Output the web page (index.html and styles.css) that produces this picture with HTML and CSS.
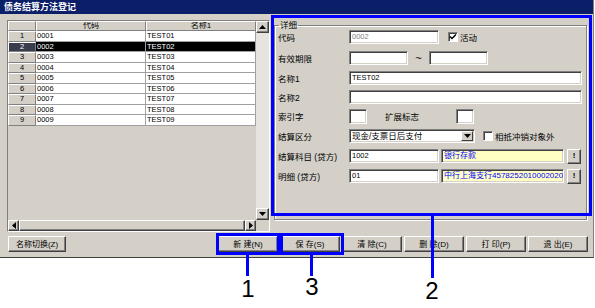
FILE: index.html
```html
<!DOCTYPE html>
<html lang="zh-CN">
<head>
  <meta charset="UTF-8" />
  <title>债务结算方法登记</title>
  <link rel="stylesheet" href="styles.css">
</head>
<body>
  <div class="window">
    <div class="titlebar">债务结算方法登记</div>

    <div class="main">
      <div class="grid">
        <div class="grid-body">
          <div class="grid-table">
            <div class="grid-row head">
              <div class="cell rowhead"></div>
              <div class="cell colhead">代码</div>
              <div class="cell colhead">名称1</div>
            </div>
            <div class="grid-row"><div class="cell rowhead">1</div><div class="cell">0001</div><div class="cell">TEST01</div></div>
            <div class="grid-row selected"><div class="cell rowhead">2</div><div class="cell">0002</div><div class="cell">TEST02</div></div>
            <div class="grid-row"><div class="cell rowhead">3</div><div class="cell">0003</div><div class="cell">TEST03</div></div>
            <div class="grid-row"><div class="cell rowhead">4</div><div class="cell">0004</div><div class="cell">TEST04</div></div>
            <div class="grid-row"><div class="cell rowhead">5</div><div class="cell">0005</div><div class="cell">TEST05</div></div>
            <div class="grid-row"><div class="cell rowhead">6</div><div class="cell">0006</div><div class="cell">TEST06</div></div>
            <div class="grid-row"><div class="cell rowhead">7</div><div class="cell">0007</div><div class="cell">TEST07</div></div>
            <div class="grid-row"><div class="cell rowhead">8</div><div class="cell">0008</div><div class="cell">TEST08</div></div>
            <div class="grid-row"><div class="cell rowhead">9</div><div class="cell">0009</div><div class="cell">TEST09</div></div>
          </div>
          <div class="vscroll">
            <div class="sbtn"><svg width="7" height="4" viewBox="0 0 7 4"><polygon points="3.5,0 7,4 0,4" /></svg></div>
            <div class="strack"></div>
            <div class="sbtn"><svg width="7" height="4" viewBox="0 0 7 4"><polygon points="0,0 7,0 3.5,4" /></svg></div>
          </div>
        </div>
        <div class="hscroll">
          <div class="sbtn"><svg width="4" height="7" viewBox="0 0 4 7"><polygon points="4,0 4,7 0,3.5" /></svg></div>
          <div class="sthumb"></div>
          <div class="sbtn"><svg width="4" height="7" viewBox="0 0 4 7"><polygon points="0,0 4,3.5 0,7" /></svg></div>
          <div class="scorner"></div>
        </div>
      </div>

      <fieldset class="detail">
        <legend>详细</legend>
        <div class="form">
          <div class="frow r21">
            <span class="lbl">代码</span>
            <div class="field w90 disabled">0002</div>
            <span class="check on ck1"><svg width="8" height="8" viewBox="0 0 8 8"><path d="M1 3.5 L3 5.5 L7 1.5" /></svg></span>
            <span class="ck-lbl">活动</span>
          </div>
          <div class="frow r21">
            <span class="lbl">有效期限</span>
            <div class="field w59"></div>
            <span class="tilde">~</span>
            <div class="field w59"></div>
          </div>
          <div class="frow">
            <span class="lbl">名称1</span>
            <div class="field wfull">TEST02</div>
          </div>
          <div class="frow r18">
            <span class="lbl">名称2</span>
            <div class="field wfull"></div>
          </div>
          <div class="frow">
            <span class="lbl">索引字</span>
            <div class="field small"></div>
            <span class="lbl lbl2">扩展标志</span>
            <div class="field small"></div>
          </div>
          <div class="frow">
            <span class="lbl">结算区分</span>
            <div class="field select">
              <span class="sel-text">现金/支票日后支付</span>
              <span class="sel-btn"><svg width="7" height="4" viewBox="0 0 7 4"><polygon points="0,0 7,0 3.5,4" /></svg></span>
            </div>
            <span class="check ck2"></span>
            <span class="ck-lbl">相抵冲销对象外</span>
          </div>
          <div class="frow">
            <span class="lbl">结算科目 (贷方)</span>
            <div class="field w90">1002</div>
            <div class="field ref">银行存款</div>
            <div class="pick">!</div>
          </div>
          <div class="frow">
            <span class="lbl">明细 (贷方)</span>
            <div class="field w90">01</div>
            <div class="field ref">中行上海支行4578252010002020</div>
            <div class="pick">!</div>
          </div>
        </div>
      </fieldset>
    </div>

    <div class="toolbar">
      <button class="btn btn-switch">名称切换(Z)</button>
      <div class="actions">
        <button class="btn">新 建(N)</button>
        <button class="btn">保 存(S)</button>
        <button class="btn">清 除(C)</button>
        <button class="btn">删 除(D)</button>
        <button class="btn">打 印(P)</button>
        <button class="btn">退 出(E)</button>
      </div>
    </div>
  </div>

  <!-- callouts drawn over the screenshot -->
  <div class="mark mark-detail"></div>
  <div class="mark mark-new"></div>
  <div class="mark mark-save"></div>
  <div class="leader leader-1"></div>
  <div class="leader leader-2"></div>
  <div class="leader leader-3"></div>
  <div class="num num-1">1</div>
  <div class="num num-2">2</div>
  <div class="num num-3">3</div>
</body>
</html>
```

FILE: styles.css
```css
body {
  margin: 0;
  background: #fff;
  position: relative;
  width: 595px;
  height: 308px;
  overflow: hidden;
  font-family: "Liberation Sans", "Noto Sans CJK SC", sans-serif;
  font-size: 8px;
  color: #000;
}

.window {
  width: 593px;
  height: 257px;
  background: #d4d0c8;
  border-right: 1px solid #808080;
  border-bottom: 1px solid #404040;
}

.titlebar {
  height: 14px;
  line-height: 14px;
  padding-left: 4px;
  background: #0b1f68;
  color: #fff;
  font-size: 9px;
  font-weight: bold;
}

.main {
  display: flex;
  align-items: flex-start;
  margin-top: 6px;
  padding-left: 7px;
}

/* ---- data grid ---- */
.grid {
  width: 263px;
  height: 212px;
  box-sizing: border-box;
  border: 1px solid;
  border-color: #808080 #fff #fff #808080;
  display: flex;
  flex-direction: column;
}

.grid-body {
  display: flex;
  height: 199px;
}

.grid-table {
  width: 248px;
  background: #d4d0c8;
}

.grid-row {
  display: grid;
  grid-template-columns: 28px 110px 110px;
  height: 10.5px;
}

.grid-row.head {
  height: 10px;
}

.cell {
  box-sizing: border-box;
  background: #fff;
  border-right: 1px solid #a0a0a0;
  border-bottom: 1px solid #a0a0a0;
  padding-left: 1px;
  font-size: 7.5px;
  line-height: 9.5px;
  white-space: nowrap;
  overflow: hidden;
}

.cell.rowhead,
.cell.colhead {
  background: #d4d0c8;
  text-align: center;
  padding-left: 0;
  border-top: 1px solid #fff;
  border-left: 1px solid #fff;
  border-right: 1px solid #808080;
  border-bottom: 1px solid #808080;
  line-height: 8.5px;
}

.cell.colhead {
  font-size: 8px;
}

.grid-row.selected .cell {
  background: #000;
  color: #fff;
}

.grid-row.selected .cell.rowhead {
  background: #3b3b4e;
}

.vscroll {
  width: 13px;
  display: flex;
  flex-direction: column;
}

.sbtn {
  width: 13px;
  height: 12px;
  box-sizing: border-box;
  background: #d4d0c8;
  border: 1px solid;
  border-color: #fff #404040 #404040 #fff;
  box-shadow: inset -1px -1px 0 #808080;
  display: flex;
  align-items: center;
  justify-content: center;
  flex: none;
}

.sbtn svg { fill: #000; }

.strack {
  flex: 1;
  background: #e6e4df;
}

.hscroll {
  display: flex;
  height: 11px;
}

.hscroll .sbtn {
  width: 11px;
  height: 11px;
}

.sthumb {
  width: 226px;
  box-sizing: border-box;
  background: #d4d0c8;
  border: 1px solid;
  border-color: #fff #404040 #404040 #fff;
  box-shadow: inset -1px -1px 0 #808080;
}

.scorner {
  flex: 1;
  background: #d4d0c8;
}

/* ---- detail form ---- */
.detail {
  margin: 0 0 0 4px;
  padding: 0 5px 0 3px;
  width: 313px;
  height: 200px;
  box-sizing: border-box;
  border: 1px solid #808080;
  box-shadow: 1px 1px 0 #fff, inset 1px 1px 0 #fff;
  min-inline-size: 0;
}

.detail legend {
  margin-left: 1px;
  padding: 0 1px;
  font-size: 8.5px;
  line-height: 10px;
}

.form {
  margin-top: -4px;
}

.frow {
  display: flex;
  align-items: center;
  height: 20px;
}

.frow.r21 { height: 21px; }
.frow.r18 { height: 18px; }

.lbl {
  width: 71px;
  flex: none;
  font-size: 8.5px;
  white-space: nowrap;
}

.lbl2 {
  margin-left: 18px;
}

.field {
  height: 14px;
  box-sizing: border-box;
  background: #fff;
  border: 1px solid;
  border-color: #808080 #fff #fff #808080;
  box-shadow: inset 1px 1px 0 #404040, inset -1px -1px 0 #d4d0c8;
  padding-left: 2px;
  font-size: 7.5px;
  line-height: 12px;
  white-space: nowrap;
  overflow: hidden;
  flex: none;
}

.w90 { width: 90px; }
.w59 { width: 59px; }
.wfull { width: 233px; }

.field.small {
  width: 18px;
  height: 15px;
}

.field.disabled {
  color: #808080;
}

.field.ref {
  width: 123px;
  margin-left: 2px;
  background: #ffffc4;
  color: #0000ff;
  font-size: 8px;
}

.tilde {
  width: 21px;
  text-align: center;
  font-size: 11px;
}

.field.select {
  width: 126px;
  display: flex;
  justify-content: space-between;
  padding-right: 1px;
}

.sel-text {
  font-size: 8.5px;
}

.sel-btn {
  width: 12px;
  height: 10px;
  margin-top: 1px;
  box-sizing: border-box;
  background: #d4d0c8;
  border: 1px solid;
  border-color: #fff #404040 #404040 #fff;
  display: flex;
  align-items: center;
  justify-content: center;
}

.check {
  width: 10px;
  height: 10px;
  box-sizing: border-box;
  background: #fff;
  border: 1px solid;
  border-color: #808080 #fff #fff #808080;
  box-shadow: inset 1px 1px 0 #404040;
  display: flex;
  align-items: center;
  justify-content: center;
  flex: none;
}

.check svg path {
  fill: none;
  stroke: #000;
  stroke-width: 1.5;
}

.ck1 { margin-left: 9px; }
.ck2 { margin-left: 8px; }

.ck-lbl {
  margin-left: 2px;
  font-size: 8.5px;
  white-space: nowrap;
}

.pick {
  width: 14px;
  height: 15px;
  margin-left: 3px;
  box-sizing: border-box;
  background: #d4d0c8;
  border: 1px solid;
  border-color: #fff #404040 #404040 #fff;
  box-shadow: inset -1px -1px 0 #808080;
  text-align: center;
  line-height: 12px;
  font-size: 8px;
  font-weight: bold;
}

/* ---- buttons ---- */
.toolbar {
  display: flex;
  justify-content: space-between;
  margin-top: 4px;
  padding: 0 5px 0 8px;
}

.actions {
  display: flex;
  gap: 2px;
}

.btn {
  width: 60px;
  height: 16px;
  padding: 0;
  box-sizing: border-box;
  background: #d4d0c8;
  border: 1px solid;
  border-color: #fff #404040 #404040 #fff;
  box-shadow: inset -1px -1px 0 #808080;
  font-family: "Liberation Sans", "Noto Sans CJK SC", sans-serif;
  font-size: 8px;
  line-height: 13px;
  color: #000;
  white-space: nowrap;
}

.btn-switch {
  width: 58px;
}

/* ---- callout overlay ---- */
.mark {
  position: absolute;
  border: 3px solid #0000ff;
  box-sizing: border-box;
}

.mark-detail { left: 271px; top: 15px; width: 321px; height: 201px; }
.mark-new { left: 216px; top: 233px; width: 64px; height: 22px; }
.mark-save { left: 280px; top: 233px; width: 64px; height: 22px; }

.leader {
  position: absolute;
  width: 3px;
  background: #0000ff;
}

.leader-1 { left: 246px; top: 255px; height: 21px; }
.leader-3 { left: 310px; top: 255px; height: 21px; }
.leader-2 { left: 431px; top: 216px; height: 62px; }

.num {
  position: absolute;
  font-family: "Liberation Sans", sans-serif;
  font-size: 24px;
  line-height: 24px;
  width: 20px;
  text-align: center;
}

.num-1 { left: 238px; top: 277px; }
.num-3 { left: 302px; top: 275px; }
.num-2 { left: 422px; top: 279px; }
```
